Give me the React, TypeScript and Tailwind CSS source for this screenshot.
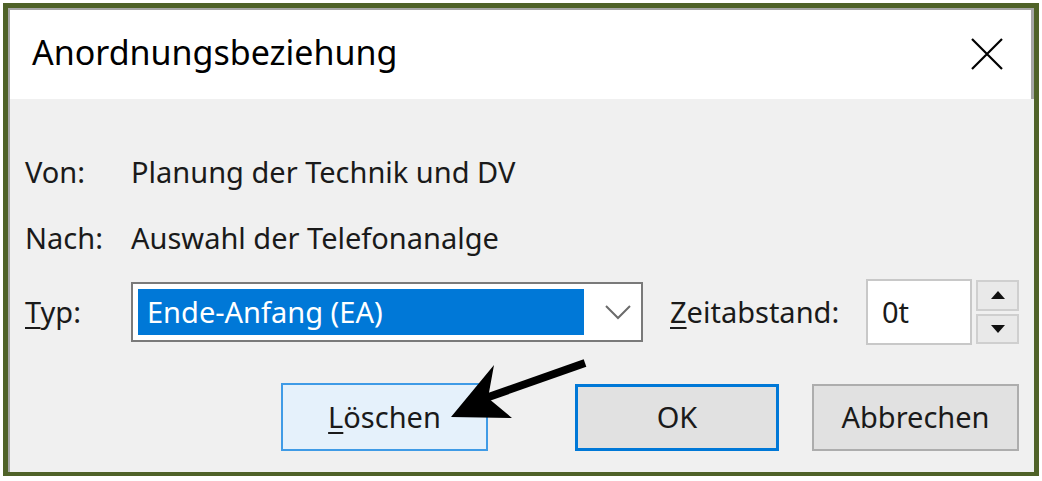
const font = { fontFamily: '"Noto Sans", "Open Sans", sans-serif' }

function Arrow() {
  // annotation arrow pointing at the Löschen button
  return (
    <svg className="absolute left-0 top-0 pointer-events-none" width="1024" height="372">
      <line x1="575" y1="264" x2="470" y2="301" stroke="#000" strokeWidth="8" />
      <polygon points="441,318 484,266 478,299 502,319" fill="#000" />
    </svg>
  )
}

export default function App() {
  return (
    <div className="w-[1042px] h-[481px] bg-white pt-[3px] pl-[3px]" style={font}>
      <div className="w-[1036px] h-[473px] border-[5px] border-b-4 border-[#4f6228] flex flex-col">
        {/* Titelleiste */}
        <div className="h-[91px] shrink-0 bg-white border-t-2 border-l-2 border-r-[3px] border-[#a6a6a6] flex items-center justify-between pl-[22px] pr-[28px]">
          <span className="text-[34px] text-black leading-none pb-[6px]">Anordnungsbeziehung</span>
          <svg width="32" height="32" viewBox="0 0 32 32" className="mb-[2px]">
            <path d="M1 1 L31 31 M31 1 L1 31" stroke="#000" strokeWidth="2.2" />
          </svg>
        </div>

        {/* Inhalt */}
        <div className="relative flex-1 bg-[#f0f0f0] border-l-2 border-[#a6a6a6] pl-[15px] pr-[15px] text-[29px] text-[#1a1a1a]">
          <div className="flex items-center h-[40px] mt-[53px]">
            <span className="w-[106px]">Von:</span>
            <span>Planung der Technik und DV</span>
          </div>
          <div className="flex items-center h-[40px] mt-[26px]">
            <span className="w-[106px]">Nach:</span>
            <span>Auswahl der Telefonanalge</span>
          </div>

          <div className="flex items-center h-[66px] mt-[21px]">
            <span className="w-[106px]"><u className="underline-offset-4">T</u>yp:</span>
            <div className="w-[512px] h-[60px] bg-white border-2 border-[#7a7a7a] flex items-center pl-[5px] pr-[8px]">
              <div className="w-[446px] h-[46px] bg-[#0078d7] text-white flex items-center pl-[9px]">Ende-Anfang (EA)</div>
              <svg className="ml-auto mr-[1px]" width="28" height="16" viewBox="0 0 28 16">
                <polyline points="2,2 14,14 26,2" fill="none" stroke="#6b6b6b" strokeWidth="2" />
              </svg>
            </div>
            <span className="ml-[27px]"><u className="underline-offset-4">Z</u>eitabstand:</span>
            <div className="ml-auto w-[106px] h-[66px] bg-white border-2 border-[#c8c8c8] flex items-center pl-[14px]">0t</div>
            <div className="ml-[4px] w-[43px] h-[64px] flex flex-col gap-[3px]">
              <div className="flex-1 bg-[#e9e9e9] border-2 border-[#cfcfcf] flex items-center justify-center">
                <svg width="14" height="8" viewBox="0 0 14 8"><polygon points="0,8 7,0 14,8" fill="#111" /></svg>
              </div>
              <div className="flex-1 bg-[#e9e9e9] border-2 border-[#cfcfcf] flex items-center justify-center">
                <svg width="14" height="8" viewBox="0 0 14 8"><polygon points="0,0 14,0 7,8" fill="#111" /></svg>
              </div>
            </div>
          </div>

          <div className="flex items-center justify-end mt-[38px] h-[68px]">
            <button className="w-[207px] h-[68px] bg-[#e5f1fb] border-2 border-[#3f9be6]"><u className="underline-offset-4">L</u>öschen</button>
            <button className="ml-[87px] w-[204px] h-[67px] bg-[#e1e1e1] border-[3px] border-[#0078d7]">OK</button>
            <button className="ml-[33px] w-[207px] h-[67px] bg-[#e1e1e1] border-2 border-[#adadad]">Abbrechen</button>
          </div>

          <Arrow />
        </div>
      </div>
    </div>
  )
}
